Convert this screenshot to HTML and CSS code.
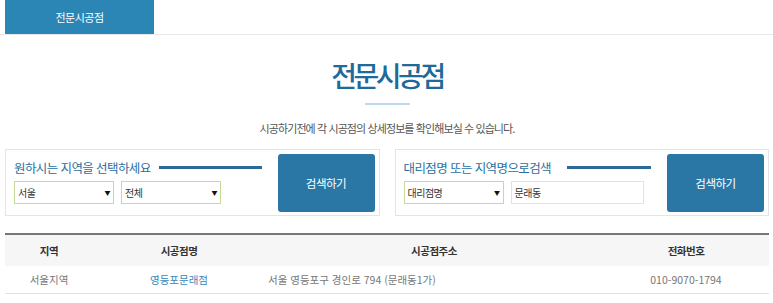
FILE: index.html
```html
<!DOCTYPE html>
<html lang="ko">
<head>
  <meta charset="UTF-8" />
  <meta name="viewport" content="width=device-width, initial-scale=1.0" />
  <title>전문시공점</title>
  <link rel="stylesheet" href="styles.css">
</head>
<body>
  <nav class="sub-nav">
    <a href="#" class="sub-tab">전문시공점</a>
  </nav>

  <div class="page">
    <h2 class="page-title">전문시공점</h2>
    <div class="title-bar"></div>
    <p class="page-desc">시공하기전에 각 시공점의 상세정보를 확인해보실 수 있습니다.</p>

    <div class="search-row">
      <div class="search-box">
        <div class="search-fields">
          <div class="search-head">
            <span>원하시는 지역을 선택하세요</span>
            <i class="head-line"></i>
          </div>
          <div class="field-row">
            <div class="fake-select green">서울<b>&#9660;</b></div>
            <div class="fake-select green">전체<b>&#9660;</b></div>
          </div>
        </div>
        <button type="button" class="search-btn">검색하기</button>
      </div>

      <div class="search-box">
        <div class="search-fields">
          <div class="search-head">
            <span>대리점명 또는 지역명으로검색</span>
            <i class="head-line"></i>
          </div>
          <div class="field-row">
            <div class="fake-select green">대리점명<b>&#9660;</b></div>
            <div class="fake-input">문래동</div>
          </div>
        </div>
        <button type="button" class="search-btn">검색하기</button>
      </div>
    </div>

    <table class="shop-table">
      <colgroup>
        <col style="width: 88px">
        <col style="width: 172px">
        <col style="width: 338px">
        <col>
      </colgroup>
      <thead>
        <tr>
          <th>지역</th>
          <th>시공점명</th>
          <th>시공점주소</th>
          <th>전화번호</th>
        </tr>
      </thead>
      <tbody>
        <tr>
          <td>서울지역</td>
          <td><a href="#">영등포문래점</a></td>
          <td class="addr">서울 영등포구 경인로 794 (문래동1가)</td>
          <td>010-9070-1794</td>
        </tr>
      </tbody>
    </table>
  </div>
</body>
</html>
```

FILE: styles.css
```css
* {
  box-sizing: border-box;
}

body {
  margin: 0;
  font-family: "Noto Sans CJK KR", "Noto Sans", sans-serif;
  background-color: #fff;
  color: #555;
}

.sub-nav {
  height: 35px;
  border-bottom: 1px solid #e8e8e8;
  padding-left: 5px;
}

.sub-tab {
  display: flex;
  align-items: center;
  justify-content: center;
  width: 149px;
  height: 34px;
  background-color: #2b86b5;
  color: #fff;
  font-size: 11px;
  letter-spacing: -0.5px;
  text-decoration: none;
}

.page {
  padding: 0 4px 0 5px;
}

.page-title {
  margin: 24px 0 0;
  text-align: center;
  font-size: 28px;
  font-weight: 500;
  letter-spacing: -3.5px;
  line-height: 32px;
  color: #1d6a9b;
}

.title-bar {
  width: 45px;
  height: 2px;
  margin: 12px auto 0;
  background-color: #bcd9ea;
}

.page-desc {
  margin: 15px 0 0;
  text-align: center;
  font-size: 11px;
  letter-spacing: -0.9px;
  color: #555;
}

.search-row {
  display: flex;
  gap: 15px;
  margin-top: 13px;
}

.search-box {
  flex: 1;
  display: flex;
  justify-content: space-between;
  height: 67px;
  padding: 4px 4px 4px 8px;
  border: 1px solid #e4e4e4;
}

.search-fields {
  padding-top: 4px;
}

.search-head {
  display: flex;
  align-items: center;
  gap: 8px;
  height: 18px;
  font-size: 12.5px;
  letter-spacing: -0.6px;
  color: #2a6fa1;
}

.head-line {
  display: block;
  width: 103px;
  height: 3px;
  background-color: #2b6a97;
}

.search-box:last-child .head-line {
  width: 84px;
  margin-left: 8px;
}

.field-row {
  display: flex;
  gap: 7px;
  margin-top: 5px;
}

.fake-select,
.fake-input {
  display: flex;
  align-items: center;
  justify-content: space-between;
  width: 100px;
  height: 23px;
  padding: 0 3px;
  font-size: 10px;
  letter-spacing: -0.5px;
  color: #333;
  background: #fff;
}

.fake-select.green {
  border: 1px solid #c4dc98;
}

.fake-select b {
  font-size: 6px;
  color: #111;
}

.fake-input {
  width: 133px;
  border: 1px solid #e2e2e2;
}

.search-btn {
  width: 97px;
  height: 58px;
  border: none;
  border-radius: 3px;
  background-color: #2a77a6;
  color: #fff;
  font-family: inherit;
  font-size: 11.5px;
  letter-spacing: -0.5px;
  cursor: pointer;
}

.shop-table {
  width: 100%;
  margin-top: 17px;
  border-collapse: collapse;
  table-layout: fixed;
  font-size: 10.5px;
}

.shop-table th {
  height: 32px;
  background-color: #f6f6f6;
  border-top: 2px solid #777;
  font-weight: 700;
  color: #333;
  letter-spacing: -0.5px;
}

.shop-table td {
  height: 27px;
  text-align: center;
  color: #777;
  border-bottom: 1px solid #e2e2e2;
}

.shop-table td.addr {
  text-align: left;
  padding-left: 3px;
}

.shop-table a {
  color: #3a86b8;
  text-decoration: none;
}
```
